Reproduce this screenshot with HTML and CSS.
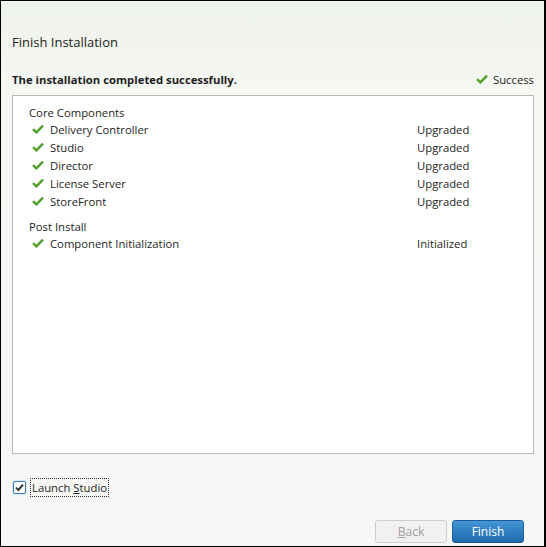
FILE: index.html
```html
<!DOCTYPE html>
<html lang="en">
<head>
  <meta charset="UTF-8" />
  <title>Finish Installation</title>
  <link rel="stylesheet" href="styles.css">
</head>
<body>
  <div class="window">
    <h1 class="title">Finish Installation</h1>

    <div class="status-row">
      <span class="summary">The installation completed successfully.</span>
      <span class="overall">
        <svg class="tick" viewBox="0 0 12 10"><path d="M1 5.2 L4.4 8.4 L11 1.6"/></svg>
        Success
      </span>
    </div>

    <div class="results">
      <div class="group">Core Components</div>
      <div class="item">
        <svg class="tick" viewBox="0 0 12 10"><path d="M1 5.2 L4.4 8.4 L11 1.6"/></svg>
        <span>Delivery Controller</span><span>Upgraded</span>
      </div>
      <div class="item">
        <svg class="tick" viewBox="0 0 12 10"><path d="M1 5.2 L4.4 8.4 L11 1.6"/></svg>
        <span>Studio</span><span>Upgraded</span>
      </div>
      <div class="item">
        <svg class="tick" viewBox="0 0 12 10"><path d="M1 5.2 L4.4 8.4 L11 1.6"/></svg>
        <span>Director</span><span>Upgraded</span>
      </div>
      <div class="item">
        <svg class="tick" viewBox="0 0 12 10"><path d="M1 5.2 L4.4 8.4 L11 1.6"/></svg>
        <span>License Server</span><span>Upgraded</span>
      </div>
      <div class="item">
        <svg class="tick" viewBox="0 0 12 10"><path d="M1 5.2 L4.4 8.4 L11 1.6"/></svg>
        <span>StoreFront</span><span>Upgraded</span>
      </div>

      <div class="group second">Post Install</div>
      <div class="item">
        <svg class="tick" viewBox="0 0 12 10"><path d="M1 5.2 L4.4 8.4 L11 1.6"/></svg>
        <span>Component Initialization</span><span>Initialized</span>
      </div>
    </div>

    <label class="launch">
      <span class="box">
        <svg viewBox="0 0 11 11"><path d="M2 5.6 L4.4 8 L9 2.6"/></svg>
      </span>
      <span class="launch-text">Launch <u>S</u>tudio</span>
    </label>

    <div class="buttons">
      <button class="btn back" disabled><u>B</u>ack</button>
      <button class="btn finish">Finish</button>
    </div>
  </div>
</body>
</html>
```

FILE: styles.css
```css
* {
  box-sizing: border-box;
}

body {
  margin: 0;
  font-family: "Open Sans", "Noto Sans", sans-serif;
  font-size: 11.3px;
  color: #1e1e1e;
}

.window {
  width: 546px;
  height: 547px;
  border: 1px solid #000;
  border-right-width: 2px;
  padding: 32px 0 0 11px;
  background: linear-gradient(180deg, #eef3ea 0%, #f5f7f3 90px, #f7f8f6 100%);
}

.title {
  margin: 0;
  font-size: 13px;
  font-weight: normal;
  line-height: 18px;
  color: #222;
}

.status-row {
  display: flex;
  justify-content: space-between;
  align-items: center;
  height: 18px;
  margin: 19px 10px 7px 0;
}

.summary {
  font-weight: bold;
}

.overall {
  display: flex;
  align-items: center;
  gap: 5px;
}

.tick {
  width: 12px;
  height: 10px;
  flex: none;
}

.tick path {
  fill: none;
  stroke: #52a02a;
  stroke-width: 2.4;
}

.results {
  width: 522px;
  height: 359px;
  padding: 8px 0 0 16px;
  background: #fff;
  border: 1px solid #b9b9b9;
}

.group {
  padding-top: 2px;
  line-height: 14px;
}

.group.second {
  margin-top: 8px;
}

.item {
  display: grid;
  grid-template-columns: 12px 361px auto;
  column-gap: 6px;
  align-items: center;
  height: 18px;
  margin-left: 3px;
}

.launch {
  display: flex;
  align-items: center;
  gap: 4px;
  height: 19px;
  margin: 24px 0 0 1px;
}

.box {
  display: flex;
  align-items: center;
  justify-content: center;
  width: 13px;
  height: 13px;
  background: #fff;
  border: 1px solid #3f7cb4;
  border-radius: 2px;
  box-shadow: 0 0 2px #8db7dc;
}

.box svg {
  width: 11px;
  height: 11px;
}

.box path {
  fill: none;
  stroke: #333;
  stroke-width: 2;
}

.launch-text {
  padding: 0 1px;
  border: 1px dotted #333;
  line-height: 17px;
}

.buttons {
  display: flex;
  justify-content: flex-end;
  gap: 5px;
  margin: 23px 20px 0 0;
}

.btn {
  width: 72px;
  height: 23px;
  padding: 0;
  border-radius: 3px;
  font-family: inherit;
  font-size: 12px;
}

.back {
  background: #f1f1f1;
  border: 1px solid #cdcdcd;
  color: #a0a0a0;
}

.finish {
  background: linear-gradient(180deg, #4596d6 0%, #2f7fc2 50%, #1f6bb0 100%);
  border: 1px solid #1b5c98;
  color: #fff;
}
```
